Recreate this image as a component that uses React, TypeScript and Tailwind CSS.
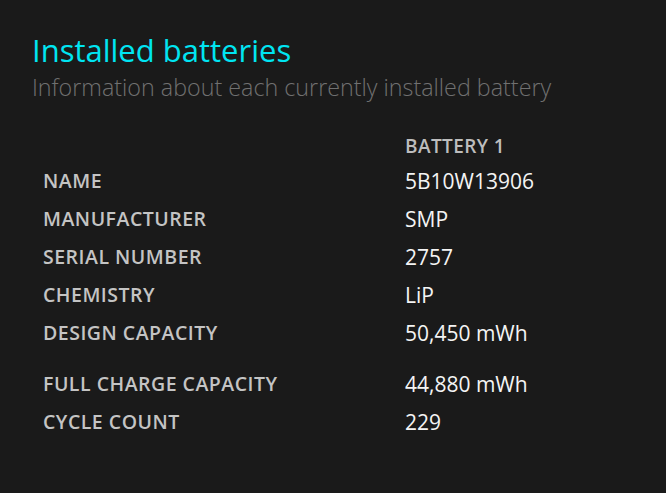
import React from "react";

const rows: [string, string, boolean?][] = [
  ["NAME", "5B10W13906"],
  ["MANUFACTURER", "SMP"],
  ["SERIAL NUMBER", "2757"],
  ["CHEMISTRY", "LiP"],
  ["DESIGN CAPACITY", "50,450 mWh"],
  ["FULL CHARGE CAPACITY", "44,880 mWh", true],
  ["CYCLE COUNT", "229"],
];

export default function App() {
  return (
    <div
      className="w-[666px] h-[493px] bg-[#1a1a1a] overflow-hidden pl-[32px] pt-[30px]"
      style={{ fontFamily: '"Open Sans", "Noto Sans", sans-serif' }}
    >
      <h1 className="text-[31px] leading-[40px] text-[#00e5f2] font-normal">Installed batteries</h1>
      <p className="text-[23.3px] leading-[34px] text-[#707070] font-light">
        Information about each currently installed battery
      </p>
      <div className="mt-[26px] grid grid-cols-[362px_auto] pl-[11px]">
        <div />
        <div className="text-[19px] leading-[32px] font-semibold text-[#bdbdbd] tracking-[0.4px]">BATTERY 1</div>
        {rows.map(([label, value, gap]) => (
          <React.Fragment key={label}>
            <div
              className={`text-[19.5px] leading-[38px] font-semibold text-[#c4c4c4] tracking-[0.5px] ${gap ? "mt-[13px]" : ""}`}
            >
              {label}
            </div>
            <div className={`text-[21px] leading-[38px] text-[#f4f4f4] ${gap ? "mt-[13px]" : ""}`}>{value}</div>
          </React.Fragment>
        ))}
      </div>
    </div>
  );
}
